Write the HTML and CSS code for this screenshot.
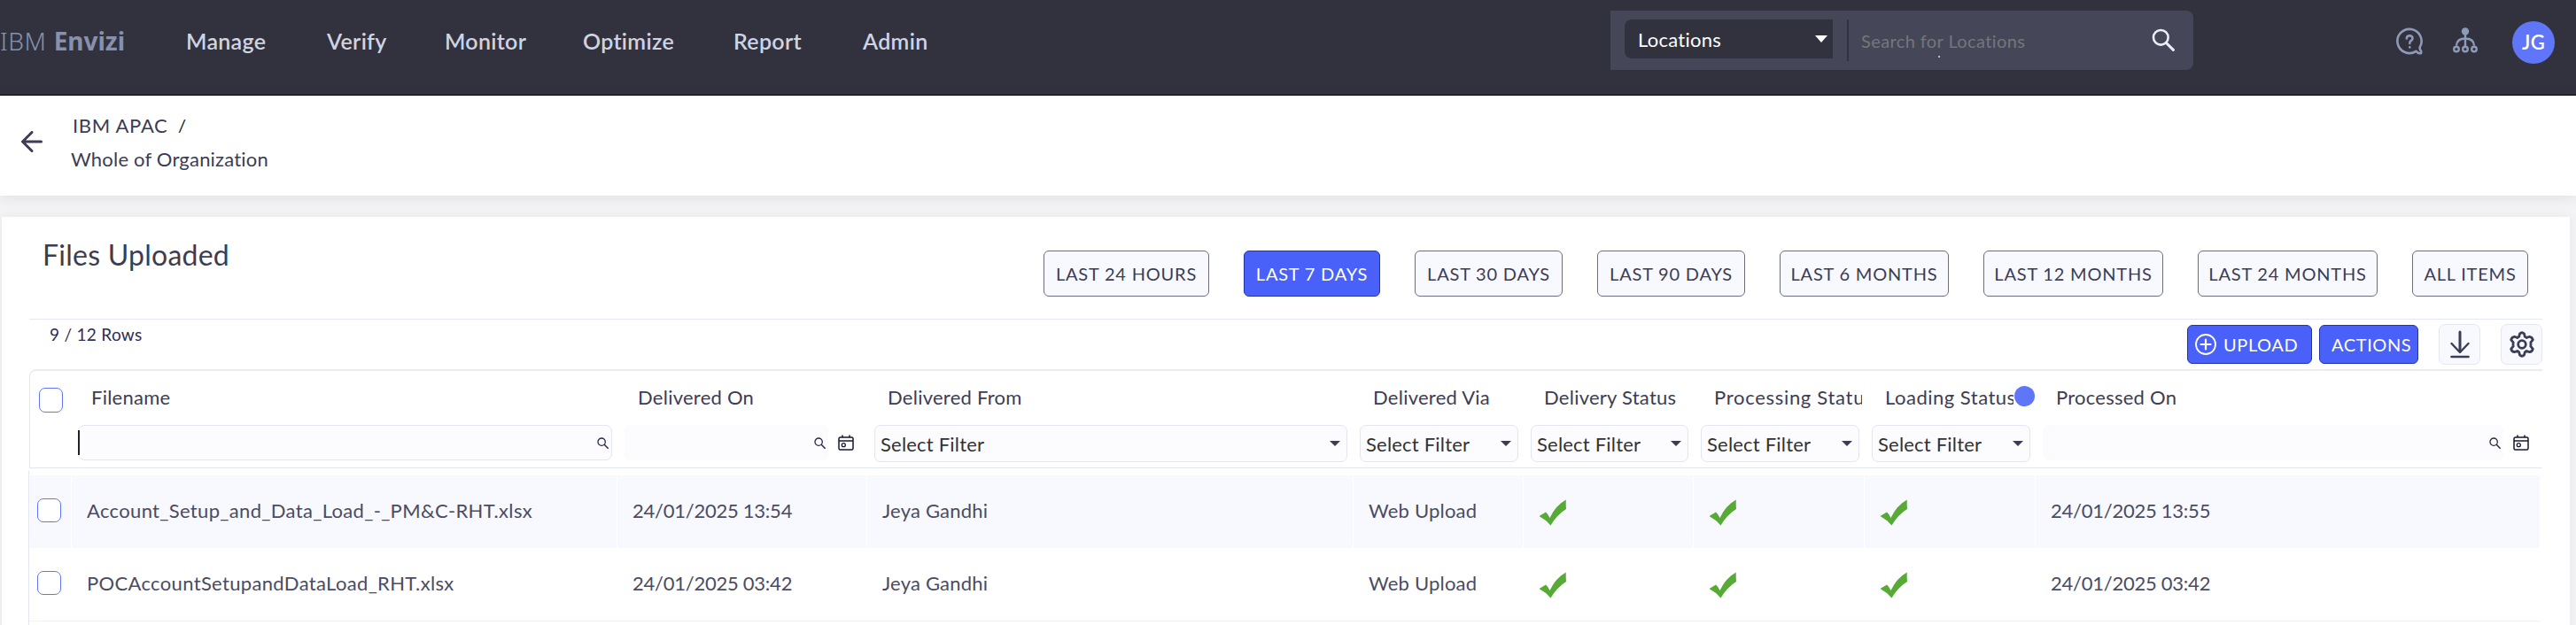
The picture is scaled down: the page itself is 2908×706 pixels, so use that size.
FILE: index.html
```
<!DOCTYPE html>
<html lang="en">
<head>
    <meta charset="UTF-8">
    <meta name="viewport" content="width=device-width, initial-scale=1.0">
    <title>IBM Envizi - Files Uploaded</title>
    <link rel="stylesheet" href="styles.css">
</head>
<body>
    <!-- Shared icons -->
    <svg class="sprite" width="0" height="0">
        <symbol id="search" viewBox="0 0 24 24">
            <circle cx="9.5" cy="9.5" r="7.7" fill="none" stroke="currentColor" stroke-width="2.4"/>
            <path d="M15.2 15.2L22.5 22.5" fill="none" stroke="currentColor" stroke-width="2.8" stroke-linecap="round"/>
        </symbol>
        <symbol id="calendar" viewBox="0 0 18 18">
            <path d="M2.5 3h13a1.5 1.5 0 0 1 1.5 1.5v11a1.5 1.5 0 0 1-1.5 1.5h-13a1.5 1.5 0 0 1-1.5-1.5v-11a1.5 1.5 0 0 1 1.5-1.5zM1 7h16M5 .5v3M13 .5v3" fill="none" stroke="currentColor" stroke-width="1.5"/>
            <circle cx="6.3" cy="11.7" r="2" fill="none" stroke="currentColor" stroke-width="1.3"/>
        </symbol>
        <symbol id="tick" viewBox="0 0 31 30">
            <path d="M.5 19L8 14.5Q11 17 12.5 21Q19 7 30.8.5Q30.5 6 31 11Q21 17 13.5 29.5Q8 23 .5 19z" fill="#56aa35"/>
        </symbol>
    </svg>

    <header class="topbar">
        <div class="logo"><span class="logo-ibm">IBM</span><span class="logo-name">Envizi</span></div>
        <nav class="menu">
            <a class="manage">Manage</a>
            <a class="verify">Verify</a>
            <a class="monitor">Monitor</a>
            <a class="optimize">Optimize</a>
            <a class="report">Report</a>
            <a class="admin">Admin</a>
        </nav>
        <div class="search-box">
            <div class="search-type">Locations<i class="caret"></i></div>
            <div class="search-input"><span>Search for Locations</span><i class="speck"></i></div>
            <svg class="search-icon"><use href="#search"/></svg>
        </div>
        <div class="tools">
            <svg class="help" viewBox="0 0 30 31" fill="none" stroke="currentColor" stroke-width="2.6" stroke-linecap="round" stroke-linejoin="round">
                <path d="M22.5 26.8A13.6 13.6 0 1 1 26.8 22.2Q26.2 24 28 26.8Q29 29.5 26.5 29.3Q24 29 22.5 26.8z"/>
                <path d="M11.8 12.5Q12 9.3 15.2 9.3Q18.5 9.5 18.5 12.3Q18.3 14.3 16.5 15.2Q15.3 16 15.3 18"/>
                <path d="M15.3 22.3v.2"/>
            </svg>
            <svg class="tree" viewBox="0 0 28 29" fill="none" stroke="currentColor" stroke-width="2.4">
                <circle cx="14" cy="4.5" r="4.2" fill="currentColor" stroke="none"/>
                <path d="M14 8v13M4 20.5q.5-8 10-8t10 8"/>
                <circle cx="4" cy="24.5" r="2.8"/>
                <circle cx="14" cy="24.5" r="2.8"/>
                <circle cx="24" cy="24.5" r="2.8"/>
            </svg>
            <div class="avatar">JG</div>
        </div>
    </header>

    <div class="breadcrumb">
        <svg class="back" viewBox="0 0 24 24" fill="none" stroke="currentColor" stroke-width="3" stroke-linecap="round" stroke-linejoin="round"><path d="M22.5 12H2M12 1.5L1.5 12L12 22.5"/></svg>
        <div class="crumbs">
            <div class="crumb"><span class="apac">IBM APAC</span><span class="slash">/</span></div>
            <div class="crumb current">Whole of Organization</div>
        </div>
    </div>

    <main class="card">
        <div class="card-head">
            <h1>Files Uploaded</h1>
            <div class="periods">
                <button class="period p187">LAST 24 HOURS</button>
                <button class="period p154 active">LAST 7 DAYS</button>
                <button class="period p167">LAST 30 DAYS</button>
                <button class="period p167">LAST 90 DAYS</button>
                <button class="period p191">LAST 6 MONTHS</button>
                <button class="period p203">LAST 12 MONTHS</button>
                <button class="period p203">LAST 24 MONTHS</button>
                <button class="period p131">ALL ITEMS</button>
            </div>
        </div>

        <div class="toolbar">
            <span class="rows">9 / 12 Rows</span>
            <div class="buttons">
                <button class="btn upload">
                    <svg viewBox="0 0 24 24" fill="none" stroke="currentColor" stroke-width="1.8"><circle cx="12" cy="12" r="11"/><path d="M12 6.5v11M6.5 12h11" stroke-width="2.2" stroke-linecap="round"/></svg>
                    UPLOAD
                </button>
                <button class="btn actions">ACTIONS</button>
                <button class="icon-btn">
                    <svg class="download" viewBox="0 0 22 32" fill="none" stroke="currentColor" stroke-width="3" stroke-linecap="round" stroke-linejoin="round"><path d="M11 2v22"/><path d="M1.5 15l9.5 10l9.5-10" stroke-width="2.4"/><path d="M1.5 30h19" stroke-width="2.6"/></svg>
                </button>
                <button class="icon-btn gear-btn">
                    <svg class="gear" viewBox="0 0 28 30" fill="none" stroke="currentColor" stroke-width="2.8" stroke-linejoin="round"><path d="M11.5 3Q14 .5 16.5 3L17.3 6.3Q18.3 6.8 19.3 7.5L22.5 6.3Q25.5 6.5 26.3 9.8L23.8 12.8Q24.2 15 23.8 17.2L26.3 20.2Q25.5 23.5 22.5 23.7L19.3 22.5Q18.3 23.2 17.3 23.7L16.5 27Q14 29.5 11.5 27L10.7 23.7Q9.7 23.2 8.7 22.5L5.5 23.7Q2.5 23.5 1.7 20.2L4.2 17.2Q3.8 15 4.2 12.8L1.7 9.8Q2.5 6.5 5.5 6.3L8.7 7.5Q9.7 6.8 10.7 6.3z"/><circle cx="14" cy="15" r="4.3"/></svg>
                </button>
            </div>
        </div>

        <div class="grid-head">
            <div class="col check-col"><i class="checkbox"></i></div>
            <div class="col">
                <div class="label">Filename</div>
                <div class="filter text-filter focused"><i class="cursor"></i><svg class="mini"><use href="#search"/></svg></div>
            </div>
            <div class="col">
                <div class="label">Delivered On</div>
                <div class="date-filter">
                    <div class="filter text-filter"><svg class="mini"><use href="#search"/></svg></div>
                    <svg class="cal"><use href="#calendar"/></svg>
                </div>
            </div>
            <div class="col">
                <div class="label">Delivered From</div>
                <div class="filter select">Select Filter<i class="caret"></i></div>
            </div>
            <div class="col">
                <div class="label">Delivered Via</div>
                <div class="filter select">Select Filter<i class="caret"></i></div>
            </div>
            <div class="col">
                <div class="label">Delivery Status</div>
                <div class="filter select">Select Filter<i class="caret"></i></div>
            </div>
            <div class="col">
                <div class="label processing">Processing Status</div>
                <div class="filter select">Select Filter<i class="caret"></i></div>
            </div>
            <div class="col loading-col">
                <div class="label loading">Loading Status</div>
                <div class="filter select">Select Filter<i class="caret"></i></div>
                <i class="dot"></i>
            </div>
            <div class="col">
                <div class="label">Processed On</div>
                <div class="date-filter last">
                    <div class="filter text-filter"><svg class="mini"><use href="#search"/></svg></div>
                    <svg class="cal"><use href="#calendar"/></svg>
                </div>
            </div>
        </div>

        <div class="grid-body">
            <div class="row shaded">
                <div class="cell"><i class="checkbox"></i></div>
                <div class="cell file">Account_Setup_and_Data_Load_-_PM&amp;C-RHT.xlsx</div>
                <div class="cell date">24/01/2025 13:54</div>
                <div class="cell">Jeya Gandhi</div>
                <div class="cell">Web Upload</div>
                <div class="cell"><svg class="tick"><use href="#tick"/></svg></div>
                <div class="cell"><svg class="tick"><use href="#tick"/></svg></div>
                <div class="cell"><svg class="tick"><use href="#tick"/></svg></div>
                <div class="cell date">24/01/2025 13:55</div>
            </div>
            <div class="row">
                <div class="cell"><i class="checkbox"></i></div>
                <div class="cell file">POCAccountSetupandDataLoad_RHT.xlsx</div>
                <div class="cell date">24/01/2025 03:42</div>
                <div class="cell">Jeya Gandhi</div>
                <div class="cell">Web Upload</div>
                <div class="cell"><svg class="tick"><use href="#tick"/></svg></div>
                <div class="cell"><svg class="tick"><use href="#tick"/></svg></div>
                <div class="cell"><svg class="tick"><use href="#tick"/></svg></div>
                <div class="cell date">24/01/2025 03:42</div>
            </div>
        </div>
    </main>
</body>
</html>
```

FILE: styles.css
```
* {
    box-sizing: border-box;
}

body {
    margin: 0;
    height: 706px;
    overflow: hidden;
    font-family: "Lato", "Open Sans", sans-serif;
    font-size: 22px;
    letter-spacing: 0.25px;
    color: #3b3d55;
    background-color: #f4f4f6;
}

button {
    font-family: inherit;
    padding: 0;
    margin: 0;
}

svg {
    display: block;
    flex-shrink: 0;
}

.sprite {
    position: absolute;
}

/* Top bar */
.topbar {
    height: 108px;
    background-color: #31323e;
    border-bottom: 1px solid #000;
    display: flex;
    align-items: flex-start;
}

.logo {
    width: 210px;
    padding-top: 28px;
    font-family: "Noto Sans", sans-serif;
    font-size: 28px;
    line-height: 36px;
    color: #8791ac;
    display: flex;
    gap: 8px;
}

.logo-ibm {
    font-weight: 300;
    letter-spacing: 0.6px;
}

.logo-name {
    font-weight: 700;
    letter-spacing: 0;
}

.menu {
    width: 1608px;
    padding-top: 30px;
    display: flex;
    font-size: 25px;
    font-weight: 600;
    line-height: 32px;
    letter-spacing: 0.3px;
    color: #d0d3e2;
}

.manage { width: 159px; }
.verify { width: 133px; }
.monitor { width: 156px; }
.optimize { width: 170px; }
.report { width: 146px; }

.search-box {
    width: 658px;
    height: 67px;
    margin-top: 12px;
    padding: 10px 21px 10px 16px;
    background-color: #454759;
    border-radius: 0 8px 8px 0;
    display: flex;
}

.search-type {
    width: 235px;
    height: 44px;
    padding: 0 6px 0 15px;
    border-radius: 8px 0 0 8px;
    background-color: #31323d;
    color: #fff;
    line-height: 41px;
    display: flex;
    align-items: center;
    justify-content: space-between;
}

.caret {
    border-left: 7px solid transparent;
    border-right: 7px solid transparent;
    border-top: 8px solid currentColor;
}

.search-input {
    flex: 1;
    height: 47px;
    margin-left: 16px;
    padding-left: 14px;
    border-left: 2px solid #31323e;
    color: #76767b;
    font-size: 20px;
    line-height: 48px;
    letter-spacing: 0.4px;
    position: relative;
}

.speck {
    position: absolute;
    left: 101px;
    top: 41px;
    width: 2px;
    height: 2px;
    background-color: #b9bac4;
}

.search-icon {
    width: 26px;
    height: 26px;
    margin-top: 10px;
    color: #eceef6;
}

.tools {
    margin-left: 229px;
    display: flex;
    color: #8f9ab8;
}

.help {
    width: 30px;
    height: 31px;
    margin-top: 31px;
}

.tree {
    width: 28px;
    height: 29px;
    margin: 31px 0 0 34px;
}

.avatar {
    width: 48px;
    height: 48px;
    margin: 24px 0 0 39px;
    border-radius: 50%;
    background-color: #6076f8;
    color: #fff;
    font-weight: 600;
    line-height: 47px;
    text-align: center;
}

/* Breadcrumb */
.breadcrumb {
    height: 113px;
    padding-left: 24px;
    background-color: #fff;
    box-shadow: 0 2px 16px rgba(40, 40, 70, 0.1);
    display: flex;
    align-items: flex-start;
    position: relative;
}

.back {
    width: 24px;
    height: 24px;
    margin-top: 40px;
}

.crumbs {
    margin-left: 32px;
    padding-top: 15px;
    line-height: 38px;
}

.crumb {
    display: flex;
}

.apac {
    width: 121px;
    padding-left: 2px;
    letter-spacing: 0.7px;
}

.current {
    letter-spacing: 0.2px;
}

.slash {
    color: #111;
    font-size: 20px;
    line-height: 36px;
}

/* Card */
.card {
    height: 480px;
    margin: 24px 7px 0 2px;
    padding: 0 31px;
    background-color: #fff;
    box-shadow: 0 0 12px rgba(40, 40, 70, 0.07);
}

.card-head {
    height: 115px;
    padding: 0 14px 0 15px;
    display: flex;
    justify-content: space-between;
}

h1 {
    margin: 0;
    padding-top: 23px;
    font-size: 32px;
    font-weight: 400;
    line-height: 40px;
}

.periods {
    margin-top: 38px;
    margin-right: 2px;
    display: flex;
    gap: 39px;
}

.period {
    height: 52px;
    border: 1px solid #6c6e80;
    border-radius: 6px;
    background-color: #f8f9fe;
    color: #3b3d55;
    font-size: 20px;
    letter-spacing: 0.8px;
    white-space: nowrap;
}

.p131 { width: 131px; }
.p154 { width: 154px; }
.p167 { width: 167px; }
.p187 { width: 187px; }
.p191 { width: 191px; }
.p203 { width: 203px; }

.period.active {
    background-color: #4961f8;
    border-color: #2233b0;
    color: #fff;
}

.toolbar {
    height: 57px;
    padding-top: 5px;
    border-top: 1px solid #e2e8f4;
    display: flex;
    justify-content: space-between;
}

.rows {
    padding-left: 23px;
    font-size: 19px;
    line-height: 24px;
    letter-spacing: 0.3px;
    color: #2d2f55;
}

.buttons {
    display: flex;
}

.btn {
    height: 44px;
    margin-top: 1px;
    border: 1px solid #2233b0;
    border-radius: 6px;
    background-color: #4961f8;
    color: #fff;
    font-size: 20px;
    letter-spacing: 0.6px;
    display: flex;
    align-items: center;
}

.upload {
    width: 141px;
    padding-left: 8px;
    gap: 8px;
}

.upload svg {
    width: 24px;
    height: 24px;
}

.actions {
    width: 112px;
    margin-left: 8px;
    padding-left: 13px;
}

.icon-btn {
    width: 47px;
    height: 46px;
    margin-left: 23px;
    border: 1px solid #e4e7f3;
    border-radius: 7px;
    background-color: #f8f9fe;
    color: #3b3d55;
    display: flex;
    align-items: center;
    justify-content: center;
}

.download {
    width: 22px;
    height: 32px;
}

.gear {
    width: 28px;
    height: 30px;
}

/* Table header */
.grid-head {
    height: 112px;
    border: 1px solid #e2e6f2;
    border-top: 2px solid #e9ecf5;
    border-right: 0;
    border-top-left-radius: 8px;
    display: grid;
    grid-template-columns: 46px 617px 282px 548px 193px 192px 193px 193px 572px;
}

.col {
    padding: 12px 6px 0 8px;
    min-width: 0;
}

.check-col {
    padding: 19px 0 0 10px;
}

.checkbox {
    display: block;
    width: 27px;
    height: 28px;
    border: 1px solid #6076f8;
    border-radius: 7px;
    background-color: #fff;
}

.label {
    height: 49px;
    padding-left: 15px;
    line-height: 36px;
    white-space: nowrap;
    overflow: hidden;
}

/* long names are cut at the column edge */
.processing {
    width: 182px;
    letter-spacing: 0.7px;
}

.loading {
    width: 160px;
    letter-spacing: 0.5px;
}

.loading-col {
    position: relative;
}

.dot {
    position: absolute;
    left: 169px;
    top: 17px;
    width: 23px;
    height: 23px;
    border-radius: 50%;
    background-color: #6076f8;
}

.filter {
    border: 1px solid #e2e6f2;
    border-radius: 7px;
    background-color: #fcfcfe;
    display: flex;
    align-items: center;
    justify-content: space-between;
}

.text-filter {
    height: 40px;
    padding-right: 2px;
    justify-content: flex-end;
}

.focused {
    padding-right: 3px;
    justify-content: space-between;
}

.cursor {
    width: 2px;
    height: 28px;
    margin-left: -1px;
    background-color: #222;
}

.mini {
    width: 13px;
    height: 13px;
    color: #26284a;
}

.date-filter {
    display: flex;
    align-items: center;
    gap: 11px;
}

.date-filter .filter {
    width: 230px;
    border-color: #fbfbfe;
}

.date-filter.last .filter {
    width: 520px;
}

.cal {
    width: 18px;
    height: 18px;
    color: #16182e;
}

.select {
    height: 42px;
    padding: 0 7px 0 6px;
    letter-spacing: 0.2px;
    color: #333;
}

.select .caret {
    border-left-width: 6px;
    border-right-width: 6px;
    border-top: 6px solid #3b3d55;
}

/* Table body */
.grid-body {
    height: 180px;
    margin: 3px 0 0 -1px;
    padding-top: 5px;
    width: 2835px;
    border-left: 1px solid #e2e6f2;
}

.row {
    height: 82px;
    display: grid;
    grid-template-columns: 47px 616px 282px 549px 192px 192px 193px 193px 570px;
    color: #4a4c62;
}

.row:last-child {
    height: 83px;
    border-bottom: 1px solid #f0f2f8;
}

.cell {
    padding: 13px 0 0 17px;
    line-height: 54px;
    letter-spacing: 0.2px;
    border-left: 1px solid #fff;
    overflow: hidden;
    white-space: nowrap;
}

.shaded .cell {
    background-color: #f8f9fe;
}

.file {
    letter-spacing: 0.34px;
}

.date {
    letter-spacing: -0.25px;
}

.cell .checkbox {
    height: 27px;
    margin: 13px 0 0 -9px;
}

.tick {
    width: 31px;
    height: 30px;
    margin: 14px 0 0;
}
```
